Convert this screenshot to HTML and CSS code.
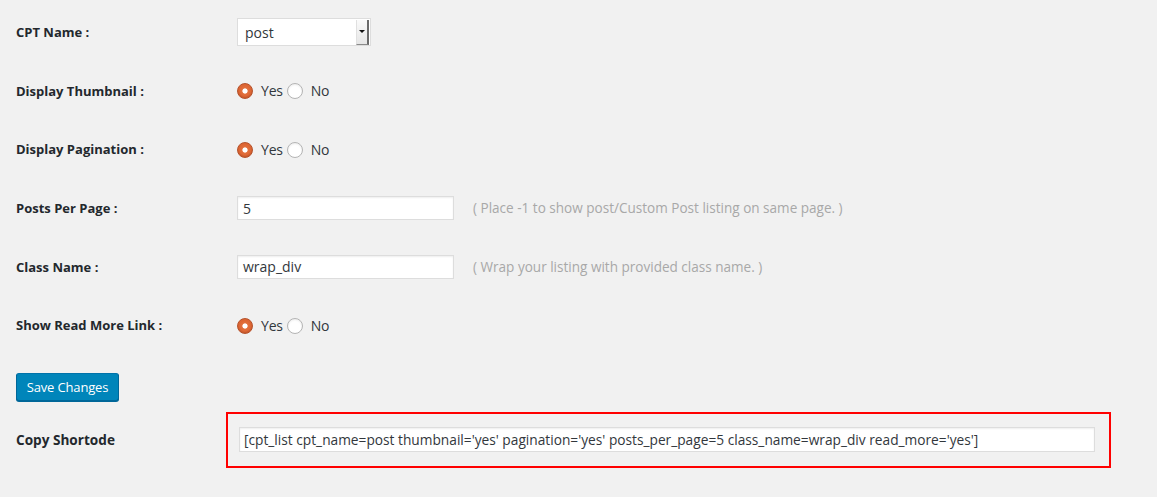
FILE: index.html
```html
<!DOCTYPE html>
<html>
<head>
<meta charset="utf-8">
<link rel="stylesheet" href="styles.css">
</head>
<body>
<div class="page">
  <div class="form">
    <div class="row">
      <div class="label">CPT Name :</div>
      <div class="field">
        <div class="select"><span class="select-value">post</span><span class="select-arrow"></span></div>
      </div>
    </div>
    <div class="row">
      <div class="label">Display Thumbnail :</div>
      <div class="field">
        <span class="radio checked"></span><span class="opt">Yes</span><span class="radio"></span><span class="opt">No</span>
      </div>
    </div>
    <div class="row">
      <div class="label">Display Pagination :</div>
      <div class="field">
        <span class="radio checked"></span><span class="opt">Yes</span><span class="radio"></span><span class="opt">No</span>
      </div>
    </div>
    <div class="row">
      <div class="label">Posts Per Page :</div>
      <div class="field">
        <div class="text-input">5</div>
        <span class="help">( Place -1 to show post/Custom Post listing on same page. )</span>
      </div>
    </div>
    <div class="row">
      <div class="label">Class Name :</div>
      <div class="field">
        <div class="text-input">wrap_div</div>
        <span class="help">( Wrap your listing with provided class name. )</span>
      </div>
    </div>
    <div class="row">
      <div class="label">Show Read More Link :</div>
      <div class="field">
        <span class="radio checked"></span><span class="opt">Yes</span><span class="radio"></span><span class="opt">No</span>
      </div>
    </div>
  </div>
  <div class="actions">
    <button class="btn-primary">Save Changes</button>
  </div>
  <div class="shortcode-row">
    <div class="label label-wide">Copy Shortode</div>
    <div class="highlight">
      <div class="shortcode">[cpt_list cpt_name=post thumbnail='yes' pagination='yes' posts_per_page=5 class_name=wrap_div read_more='yes']</div>
    </div>
  </div>
</div>
</body>
</html>
```
FILE: styles.css
```css
html, body {
  margin: 0;
  padding: 0;
  background: #f1f1f1;
}
body {
  font-family: "Open Sans", "Noto Sans", sans-serif;
  color: #32373c;
  width: 1157px;
  height: 497px;
  overflow: hidden;
}
.page {
  padding: 3px 0 0 16px;
}
.row {
  display: flex;
  align-items: center;
  height: 58.6px;
}
.label {
  width: 210px;
  flex: none;
  font-weight: 700;
  font-size: 13px;
  color: #23282d;
}
.label-wide {
  font-size: 13.6px;
}
.field {
  display: flex;
  align-items: center;
  padding-left: 11px;
  font-size: 14px;
}
.select {
  box-sizing: border-box;
  width: 134px;
  height: 28px;
  background: #fff;
  border: 1px solid #ddd;
  display: flex;
  align-items: center;
  justify-content: space-between;
  padding: 0 1px 0 7px;
}
.select-value {
  font-size: 14px;
  color: #32373c;
}
.select-arrow {
  box-sizing: border-box;
  width: 13px;
  height: 25px;
  background: linear-gradient(#fafafa, #e6e6e6);
  border-right: 2px solid #6b6b6b;
  border-bottom: 1px solid #8a8a8a;
  border-left: 1px solid #e0e0e0;
  display: flex;
  align-items: center;
  justify-content: center;
}
.select-arrow::after {
  content: "";
  border-left: 3px solid transparent;
  border-right: 3px solid transparent;
  border-top: 3px solid #111;
}
.radio {
  box-sizing: border-box;
  width: 16px;
  height: 16px;
  border-radius: 50%;
  background: #fff;
  border: 1px solid #b4b4b4;
  box-shadow: inset 0 1px 2px rgba(0,0,0,0.08);
  flex: none;
  margin-top: 1px;
}
.radio.checked {
  border: 1px solid #b5512a;
  background: radial-gradient(circle, #fff 0, #fff 2.2px, #e2703d 3px, #dd6533 6px);
  box-shadow: inset 0 -1px 1px rgba(0,0,0,0.12);
}
.opt {
  margin: 0 4px 0 8px;
  color: #32373c;
  letter-spacing: -0.2px;
}
.text-input {
  box-sizing: border-box;
  width: 217px;
  height: 24px;
  background: #fff;
  border: 1px solid #ddd;
  box-shadow: inset 0 1px 2px rgba(0,0,0,0.07);
  padding: 0 5px;
  display: flex;
  align-items: center;
  font-size: 14px;
  color: #32373c;
}
.help {
  margin-left: 19px;
  font-size: 13.55px;
  color: #a8a8a8;
}
.actions {
  padding-top: 18.4px;
}
.btn-primary {
  box-sizing: border-box;
  width: 103px;
  height: 28px;
  background: #0085ba;
  border: 1px solid;
  border-color: #0073aa #006799 #006799;
  border-radius: 3px;
  box-shadow: 0 1px 0 #006799;
  color: #fff;
  font-family: "Open Sans", "Noto Sans", sans-serif;
  font-size: 13px;
  letter-spacing: -0.15px;
  padding: 0;
  display: flex;
  align-items: center;
  justify-content: center;
}
.shortcode-row {
  display: flex;
  align-items: center;
  margin-top: 11px;
}
.highlight {
  box-sizing: border-box;
  width: 885px;
  height: 56px;
  border: 2px solid #ff0000;
  padding: 13px 14px 0 11px;
}
.shortcode {
  box-sizing: border-box;
  width: 856px;
  height: 25px;
  background: #fff;
  border: 1px solid #ddd;
  box-shadow: inset 0 1px 2px rgba(0,0,0,0.07);
  padding: 0 4px;
  display: flex;
  align-items: center;
  font-size: 13.72px;
  color: #32373c;
  white-space: nowrap;
  overflow: hidden;
}
```
